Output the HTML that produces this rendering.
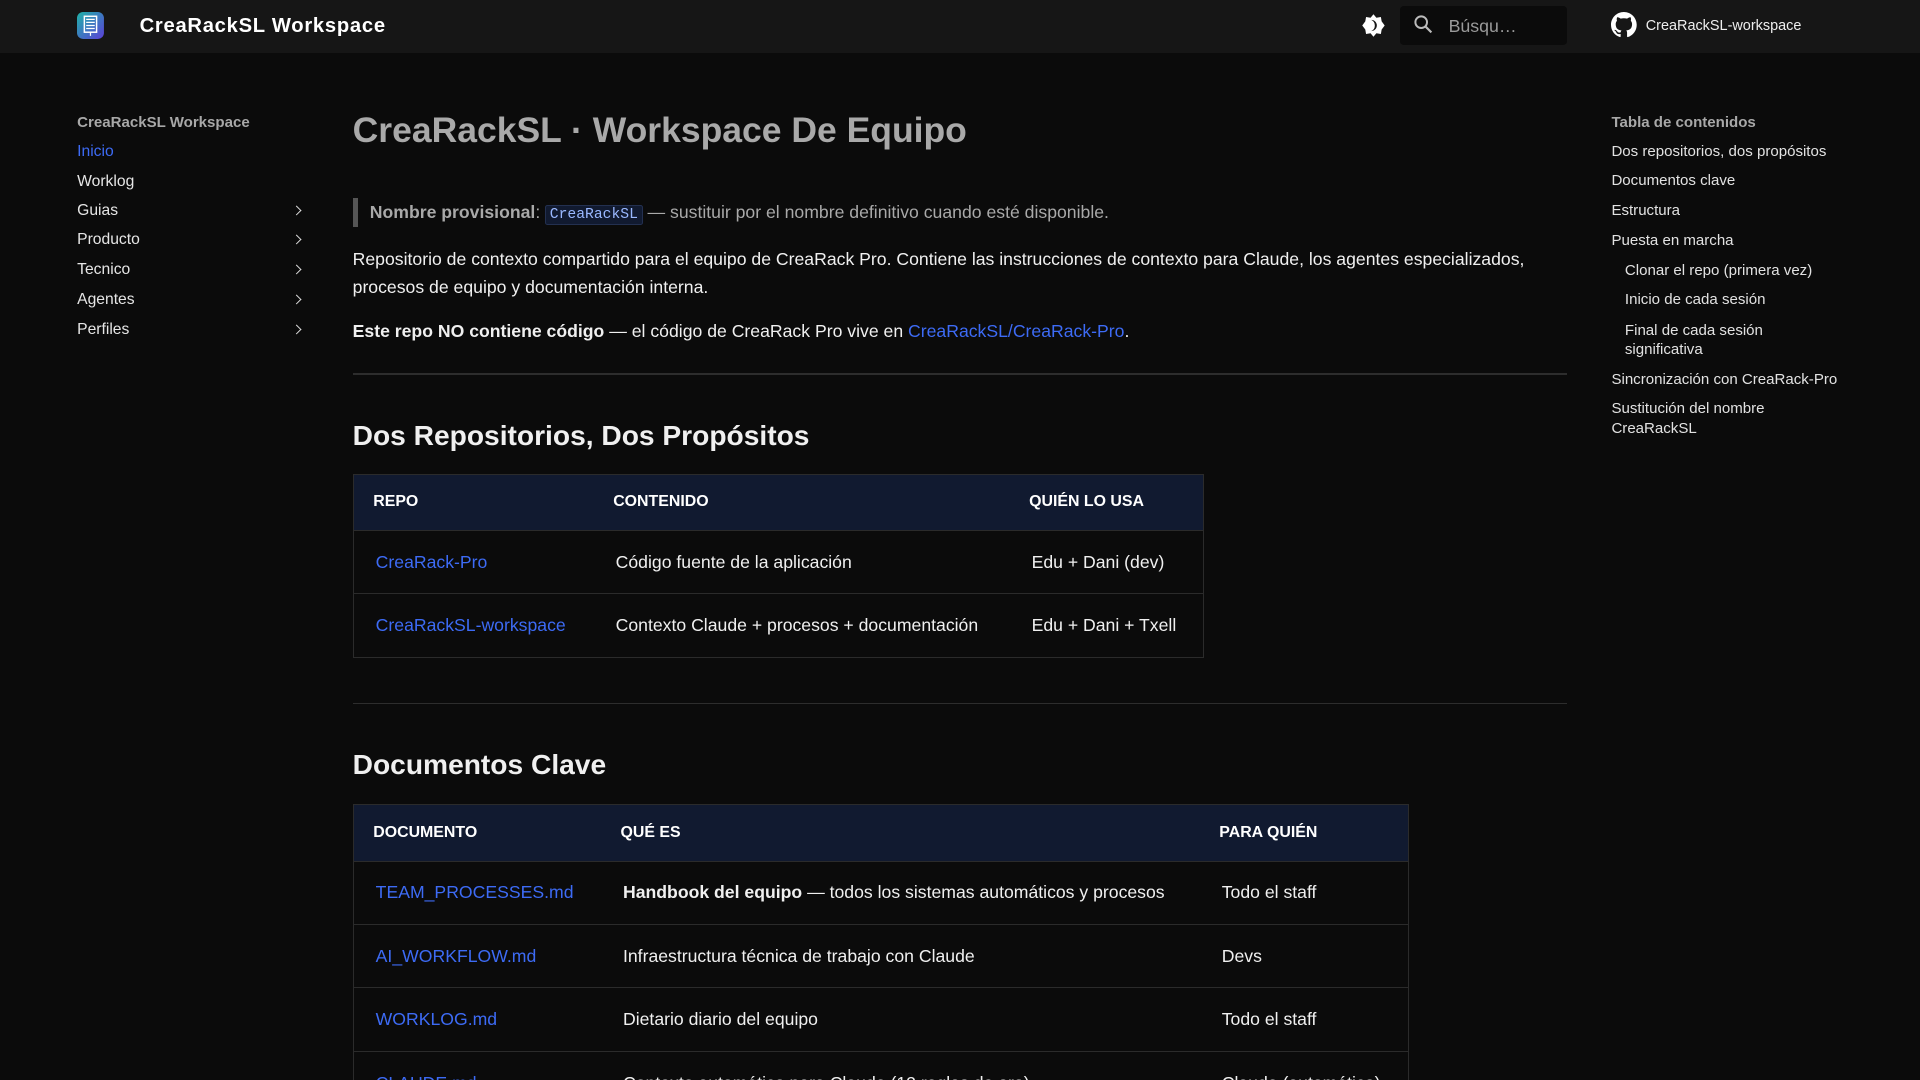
<!DOCTYPE html>
<html><head><meta charset="utf-8"><style>
html,body{margin:0;padding:0;background:#0b0b0b;overflow:hidden;width:1920px;height:1080px}
#w{zoom:1.2245;width:1568px;height:882px;position:relative;font-family:"Liberation Sans",sans-serif;color:#e6e6e6}
.hd{position:absolute;left:0;top:0;width:1568px;height:43px;background:#161616}
.ab{position:absolute}
.nav div{position:absolute;left:63px;font-size:12.8px;color:#e6e6e6}
.nav .c{position:absolute;left:239px;width:5px;height:5px;border-right:1.6px solid #ddd;border-top:1.6px solid #ddd;transform:rotate(45deg)}
.toc div{position:absolute;left:1316px;font-size:12.3px;color:#e2e2e2;line-height:16px}
.toc .s{left:1327px}
a{color:#3d6bf5;text-decoration:none}
.p{position:absolute;left:288px;font-size:14.4px;color:#f0f0f0}
.hr{position:absolute;left:288px;width:992px;height:1px;background:#2d2d2d}
h1,h2{margin:0;position:absolute;left:288px;font-weight:bold}
table{position:absolute;left:288px;border-collapse:collapse;border:1px solid #2b2b2b;font-size:14.4px;color:#f0f0f0}
th{background:#111a30;text-align:left;font-size:13px;font-weight:bold;height:45px;padding:0 16px;color:#fff;border-bottom:1px solid #2b2b2b}
td{height:51px;padding:0 18px;border-bottom:1px solid #2b2b2b;white-space:nowrap}
</style></head><body><div id="w">
<div class="hd"></div>
<svg class="ab" style="left:63px;top:10px" width="22" height="22" viewBox="0 0 22 22"><defs><linearGradient id="g" x1="0" y1="0" x2="1" y2="1"><stop offset="0" stop-color="#1fb3a8"/><stop offset="1" stop-color="#5b3fd8"/></linearGradient></defs><rect width="22" height="22" rx="5" fill="url(#g)"/><rect x="6" y="3.5" width="10" height="13" fill="none" stroke="#fff" stroke-width="1.2"/><path d="M7.5 6h7M7.5 8.5h7M7.5 11h7M7.5 13.5h7M11 16.5v3" stroke="#fff" stroke-width="1"/></svg>
<div class="ab" style="left:114px;top:12px;font-size:16.5px;font-weight:bold;letter-spacing:.6px;color:#fff">CreaRackSL Workspace</div>
<svg class="ab" style="left:1111px;top:10px" width="22" height="22" viewBox="0 0 24 24"><path fill="#fff" d="M12 2l2.6 3.1 4-.7.7 4L22 12l-2.7 3.6-.7 4-4-.7L12 22l-2.6-3.1-4 .7-.7-4L2 12l2.7-3.6.7-4 4 .7z"/><path fill="#161616" d="M10 7a5 5 0 1 1 0 10 5.5 5.5 0 0 0 0-10z"/></svg>
<div class="ab" style="left:1143px;top:5px;width:137px;height:32px;background:#0b0b0b;border-radius:3px"></div>
<svg class="ab" style="left:1153px;top:11px" width="19" height="19" viewBox="0 0 24 24"><circle cx="9.5" cy="9.5" r="6" fill="none" stroke="#bbb" stroke-width="2"/><path d="M14 14l6 6" stroke="#bbb" stroke-width="2.2"/></svg>
<div class="ab" style="left:1183px;top:13px;font-size:14.5px;color:#9a9a9a">Búsqu…</div>
<svg class="ab" style="left:1316px;top:10px" width="21" height="21" viewBox="0 0 16 16"><path fill="#fff" d="M8 0C3.58 0 0 3.58 0 8c0 3.54 2.29 6.530 5.47 7.59.4.07.55-.17.55-.38 0-.19-.01-.82-.01-1.49-2.01.37-2.530-.49-2.69-.94-.09-.23-.48-.94-.82-1.13-.28-.15-.68-.52-.01-.53.63-.01 1.08.58 1.23.82.72 1.21 1.87.87 2.33.66.07-.52.28-.87.51-1.07-1.78-.2-3.64-.89-3.640-3.95 0-.87.31-1.59.82-2.15-.08-.2-.36-1.02.08-2.12 0 0 .67-.21 2.2.82.64-.18 1.32-.27 2-.27.68 0 1.36.09 2 .27 1.53-1.04 2.2-.82 2.2-.82.44 1.1.16 1.92.08 2.12.51.56.82 1.27.82 2.15 0 3.07-1.87 3.75-3.65 3.95.29.25.54.73.54 1.48 0 1.07-.01 1.93-.01 2.2 0 .21.15.46.55.38A8.013 8.013 0 0016 8c0-4.42-3.58-8-8-8z"/></svg>
<div class="ab" style="left:1344px;top:15px;font-size:11.8px;color:#eee">CreaRackSL-workspace</div>

<div class="nav">
<div style="top:93px;font-size:12.3px;font-weight:bold;color:#a8a8a8">CreaRackSL Workspace</div>
<div style="top:117px;color:#3d6bf5">Inicio</div>
<div style="top:141px">Worklog</div>
<div style="top:165px">Guias</div><span class="c ab" style="top:169px"></span>
<div style="top:189px">Producto</div><span class="c ab" style="top:193px"></span>
<div style="top:213px">Tecnico</div><span class="c ab" style="top:217px"></span>
<div style="top:238px">Agentes</div><span class="c ab" style="top:242px"></span>
<div style="top:262px">Perfiles</div><span class="c ab" style="top:266px"></span>
</div>

<h1 style="top:90px;font-size:29px;color:#a9a9a9">CreaRackSL · Workspace De Equipo</h1>
<div class="ab" style="left:288px;top:162px;width:4px;height:23px;background:#555"></div>
<div class="p" style="left:302px;top:165px;font-size:14.4px;color:#a9a9a9"><b>Nombre provisional</b>: <span style="font-family:'Liberation Mono',monospace;font-size:12px;color:#9ab8ff;background:#111a30;border:1px solid #233050;border-radius:2px;padding:1px 3px">CreaRackSL</span> — sustituir por el nombre definitivo cuando esté disponible.</div>
<div class="p" style="top:200px;line-height:23px;width:992px">Repositorio de contexto compartido para el equipo de CreaRack Pro. Contiene las instrucciones de contexto para Claude, los agentes especializados, procesos de equipo y documentación interna.</div>
<div class="p" style="top:262px"><b>Este repo NO contiene código</b> — el código de CreaRack Pro vive en <a href="#">CreaRackSL/CreaRack-Pro</a>.</div>
<div class="hr" style="top:305px"></div>
<h2 style="top:343px;font-size:23px;color:#f0f0f0">Dos Repositorios, Dos Propósitos</h2>
<table style="top:387px;width:695px">
<tr><th style="width:164px">REPO</th><th>CONTENIDO</th><th>QUIÉN LO USA</th></tr>
<tr><td><a href="#">CreaRack-Pro</a></td><td>Código fuente de la aplicación</td><td>Edu + Dani (dev)</td></tr>
<tr><td><a href="#">CreaRackSL-workspace</a></td><td>Contexto Claude + procesos + documentación</td><td>Edu + Dani + Txell</td></tr>
</table>
<div class="hr" style="top:574px"></div>
<h2 style="top:612px;font-size:23px;color:#f0f0f0">Documentos Clave</h2>
<table style="top:657px;width:863px">
<tr><th style="width:170px">DOCUMENTO</th><th style="width:457px">QUÉ ES</th><th>PARA QUIÉN</th></tr>
<tr><td><a href="#">TEAM_PROCESSES.md</a></td><td><b>Handbook del equipo</b> — todos los sistemas automáticos y procesos</td><td>Todo el staff</td></tr>
<tr><td><a href="#">AI_WORKFLOW.md</a></td><td>Infraestructura técnica de trabajo con Claude</td><td>Devs</td></tr>
<tr><td><a href="#">WORKLOG.md</a></td><td>Dietario diario del equipo</td><td>Todo el staff</td></tr>
<tr><td><a href="#">CLAUDE.md</a></td><td>Contexto automático para Claude (12 reglas de oro)</td><td>Claude (automático)</td></tr>
</table>

<div class="toc">
<div style="top:92px;font-weight:bold;color:#a8a8a8">Tabla de contenidos</div>
<div style="top:116px">Dos repositorios, dos propósitos</div>
<div style="top:140px">Documentos clave</div>
<div style="top:164px">Estructura</div>
<div style="top:189px">Puesta en marcha</div>
<div class="s" style="top:213px">Clonar el repo (primera vez)</div>
<div class="s" style="top:237px">Inicio de cada sesión</div>
<div class="s" style="top:262px;width:150px">Final de cada sesión significativa</div>
<div style="top:302px">Sincronización con CreaRack-Pro</div>
<div style="top:326px;width:160px">Sustitución del nombre CreaRackSL</div>
</div>
</div></body></html>
